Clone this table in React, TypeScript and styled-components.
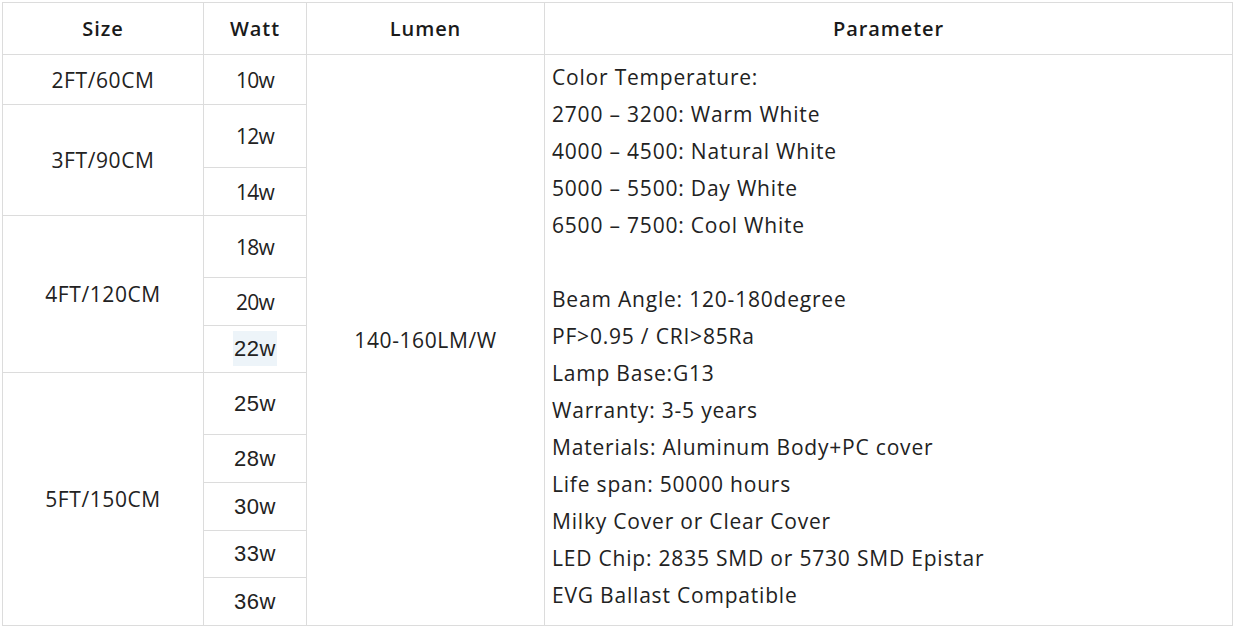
import React from 'react';
import styled, { createGlobalStyle } from 'styled-components';

const GlobalStyle = createGlobalStyle`
	body {
		margin: 0;
		background: #fff;
		color: #222;
		font-family: 'Open Sans', 'Liberation Sans', sans-serif;
	}
`;

const sizes = [
	{ size: '2FT/60CM', watts: [{ w: '10w', h: 50 }] },
	{
		size: '3FT/90CM',
		watts: [
			{ w: '12w', h: 63 },
			{ w: '14w', h: 48 },
		],
	},
	{
		size: '4FT/120CM',
		watts: [
			{ w: '18w', h: 62 },
			{ w: '20w', h: 48 },
			{ w: '22w', h: 47, arial: true },
		],
	},
	{
		size: '5FT/150CM',
		watts: [
			{ w: '25w', h: 62, arial: true },
			{ w: '28w', h: 48, arial: true },
			{ w: '30w', h: 48, arial: true },
			{ w: '33w', h: 47, arial: true },
			{ w: '36w', h: 48, arial: true },
		],
	},
];

const params = [
	'Color Temperature:',
	'2700 – 3200: Warm White',
	'4000 – 4500: Natural White',
	'5000 – 5500: Day White',
	'6500 – 7500: Cool White',
	'',
	'Beam Angle: 120-180degree',
	'PF>0.95 / CRI>85Ra',
	'Lamp Base:G13',
	'Warranty: 3-5 years',
	'Materials: Aluminum Body+PC cover',
	'Life span: 50000 hours',
	'Milky Cover or Clear Cover',
	'LED Chip: 2835 SMD or 5730 SMD Epistar',
	'EVG Ballast Compatible',
];

const App = () => {
	const rows: React.ReactNode[] = [];
	const total = sizes.reduce((n, s) => n + s.watts.length, 0);

	sizes.forEach((s, si) => {
		s.watts.forEach((watt, wi) => {
			rows.push(
				<Row key={watt.w} $h={watt.h}>
					{wi === 0 && <Cell rowSpan={s.watts.length}>{s.size}</Cell>}
					<WattCell $arial={watt.arial}>
						{watt.w === '22w' ? <Marked>{watt.w}</Marked> : watt.w}
					</WattCell>
					{si === 0 && wi === 0 && (
						<>
							<Cell rowSpan={total}>140-160LM/W</Cell>
							<ParamCell rowSpan={total}>
								{params.map((p, i) => (
									<ParamLine key={i}>{p || '\u00a0'}</ParamLine>
								))}
							</ParamCell>
						</>
					)}
				</Row>,
			);
		});
	});

	return (
		<>
			<GlobalStyle />
			<Wrapper>
				<SpecTable>
					<colgroup>
						<col style={{ width: 201 }} />
						<col style={{ width: 103 }} />
						<col style={{ width: 238 }} />
						<col style={{ width: 688 }} />
					</colgroup>
					<thead>
						<Row $h={52}>
							<Head>Size</Head>
							<Head>Watt</Head>
							<Head>Lumen</Head>
							<Head>Parameter</Head>
						</Row>
					</thead>
					<tbody>{rows}</tbody>
				</SpecTable>
			</Wrapper>
		</>
	);
};

export default App;

const Wrapper = styled.div`
	padding: 2px 0 0 2px;
`;

const SpecTable = styled.table`
	border-collapse: collapse;
	table-layout: fixed;
	width: 1231px;
`;

const Row = styled.tr<{ $h: number }>`
	height: ${props => props.$h}px;
`;

const Head = styled.th`
	border: 1px solid #dcdcdc;
	padding: 0;
	font-size: 20px;
	font-weight: 600;
	letter-spacing: 0.9px;
	color: #1a1a1a;
	text-align: center;
	vertical-align: middle;
`;

const Cell = styled.td`
	border: 1px solid #dcdcdc;
	padding: 0;
	text-align: center;
	vertical-align: middle;
	font-size: 21px;
	letter-spacing: 0.6px;
	color: #222;
`;

const WattCell = styled(Cell)<{ $arial?: boolean }>`
	font-family: ${props => (props.$arial ? "'Liberation Sans', Arial, sans-serif" : "'Open Sans', sans-serif")};
	font-size: ${props => (props.$arial ? '22px' : '21px')};
	letter-spacing: ${props => (props.$arial ? '0.6px' : '-0.8px')};
`;

const Marked = styled.span`
	background: #edf4f9;
	padding: 5px 1px;
`;

const ParamCell = styled.td`
	border: 1px solid #dcdcdc;
	padding: 4px 8px 0 7px;
	vertical-align: top;
	text-align: left;
`;

const ParamLine = styled.div`
	font-size: 21px;
	line-height: 37px;
	letter-spacing: 0.8px;
	color: #222;
	white-space: nowrap;
`;
